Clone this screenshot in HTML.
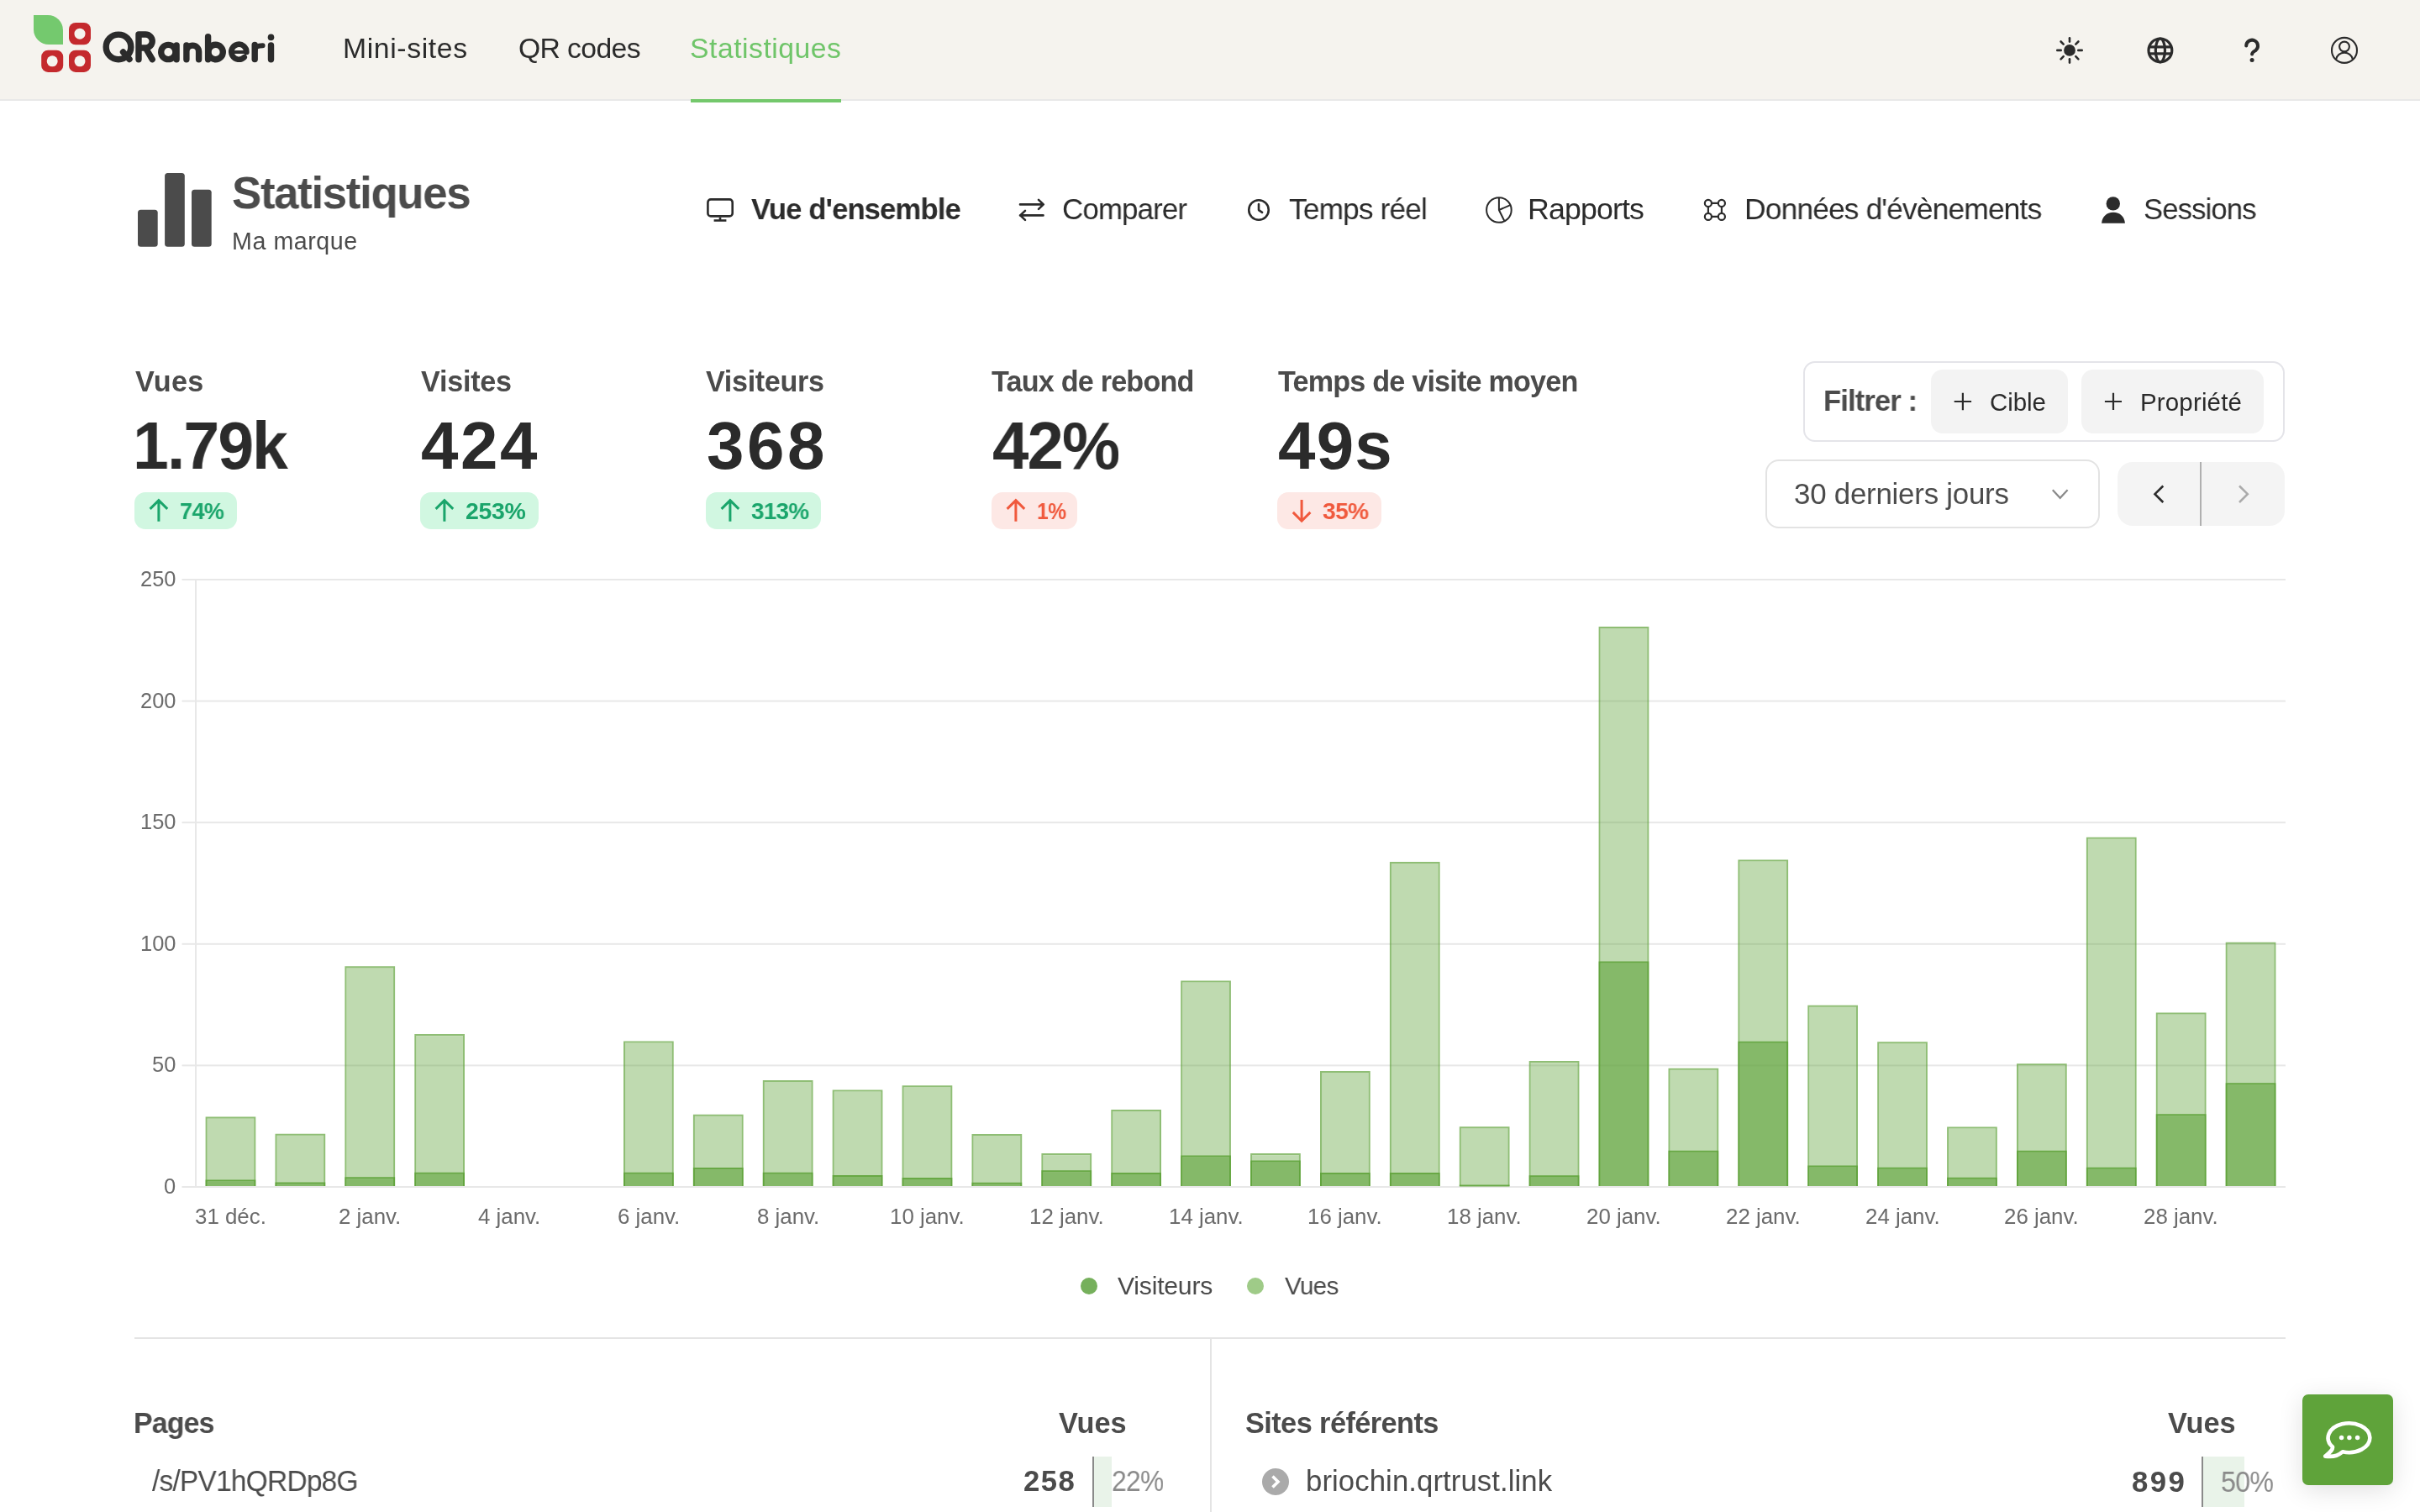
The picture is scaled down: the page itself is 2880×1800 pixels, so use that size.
<!DOCTYPE html>
<html><head><meta charset="utf-8"><style>
html,body{margin:0;padding:0;}
body{width:2880px;height:1800px;overflow:hidden;position:relative;background:#fff;font-family:"Liberation Sans",sans-serif;}
.t{position:absolute;white-space:nowrap;will-change:transform;}
.a{position:absolute;}
svg{position:absolute;overflow:visible;}
@media (max-width:2000px){html{zoom:0.5;}}
</style></head><body>
<div class="a" style="left:0;top:0;width:2880px;height:118px;background:#f5f3ee;border-bottom:2px solid #e8e8e8"></div>
<svg style="left:0;top:0" width="400" height="118" viewBox="0 0 400 118">
<path d="M40,18 H57 A18,18 0 0 1 75,36 V53 H58 A18,18 0 0 1 40,35 Z" fill="#74c96e"/>
<g fill="#c4292d">
<rect x="82" y="27" width="26" height="26.3" rx="8"/>
<rect x="49.2" y="59.7" width="26" height="26.2" rx="8"/>
<rect x="82" y="59.7" width="26" height="26.2" rx="8"/>
</g>
<g fill="#f5f3ee">
<circle cx="95" cy="40.2" r="6.5"/>
<circle cx="62.2" cy="72.8" r="6.5"/>
<circle cx="95" cy="72.8" r="6.5"/>
</g>
</svg>
<svg style="left:0;top:0" width="400" height="118" viewBox="0 0 400 118">
<g stroke="#2b2b2b" stroke-width="7.4" stroke-linecap="round" stroke-linejoin="round" fill="none">
<circle cx="141" cy="55.9" r="14.8"/>
<line x1="146.5" y1="62" x2="154" y2="70.5"/>
<path d="M165,70.7 V41 H173.2 A8,8 0 0 1 173.2,57 H165 M173.5,57.5 L181.2,70.7"/>
<circle cx="200.3" cy="62" r="8.6"/><line x1="210.1" y1="54" x2="210.1" y2="70.7"/>
<path d="M221.9,54 V70.7 M221.9,61.5 A7.35,7.35 0 0 1 236.6,61.5 V70.7"/>
<circle cx="256.6" cy="62" r="8.7"/><line x1="247.6" y1="43.8" x2="247.6" y2="70.7"/>
<path d="M293.4,62 A9.05,9.05 0 1 0 290.75,68.15" stroke-width="6.6"/><path d="M276,62 H294" stroke-width="3.9" stroke-linecap="butt"/>
<line x1="303.2" y1="53.4" x2="303.2" y2="70.6"/><path d="M303.4,60 C303.8,55.8 306.6,54.2 312.6,54.2" stroke-width="6"/>
<line x1="322.5" y1="54" x2="322.5" y2="70.7"/>
</g>
<circle cx="322.5" cy="44.4" r="3.8" fill="#2b2b2b"/>
</svg>
<div class="t" style="left:408.12px;top:41.15px;font-size:33.72px;line-height:33.72px;font-weight:400;color:#2b2b2b;letter-spacing:0.631px;">Mini-sites</div>
<div class="t" style="left:616.96px;top:41.15px;font-size:33.72px;line-height:33.72px;font-weight:400;color:#2b2b2b;letter-spacing:-0.623px;">QR codes</div>
<div class="t" style="left:821.40px;top:41.15px;font-size:33.72px;line-height:33.72px;font-weight:400;color:#6fc569;letter-spacing:0.513px;">Statistiques</div>
<div class="a" style="left:822px;top:118px;width:179px;height:4px;background:#74c86c"></div>
<svg style="left:0;top:0" width="2880" height="118" viewBox="0 0 2880 118">
<g stroke="#2b2b2b" stroke-width="2.6" stroke-linecap="round" fill="none">
<circle cx="2463" cy="59.9" r="6.9" fill="#2b2b2b" stroke="none"/>
<line x1="2463" y1="45.2" x2="2463" y2="49.6"/><line x1="2463" y1="70.2" x2="2463" y2="74.6"/>
<line x1="2448.3" y1="59.9" x2="2452.7" y2="59.9"/><line x1="2473.3" y1="59.9" x2="2477.7" y2="59.9"/>
<line x1="2452.6" y1="49.5" x2="2455.7" y2="52.6"/><line x1="2470.3" y1="67.2" x2="2473.4" y2="70.3"/>
<line x1="2452.6" y1="70.3" x2="2455.7" y2="67.2"/><line x1="2470.3" y1="52.6" x2="2473.4" y2="49.5"/>
</g>
<g stroke="#2b2b2b" stroke-width="3.2" fill="none">
<circle cx="2570.9" cy="59.9" r="13.9"/>
<ellipse cx="2570.9" cy="59.9" rx="5.6" ry="13.9"/>
<line x1="2557" y1="55.9" x2="2584.8" y2="55.9"/>
<line x1="2557" y1="63.9" x2="2584.8" y2="63.9"/>
</g>
<path d="M2673.2,54.6 A6.9,6.9 0 1 1 2684.6,59.8 C2682,61.6 2680.1,62.4 2680.1,64.6" stroke="#2b2b2b" stroke-width="4" stroke-linecap="round" fill="none"/>
<circle cx="2680.1" cy="71.4" r="2.5" fill="#2b2b2b"/>
<g stroke="#2b2b2b" stroke-width="2.1" fill="none">
<circle cx="2790" cy="59.9" r="15"/>
<circle cx="2790" cy="55.5" r="5.9"/>
<path d="M2780,70.8 A10.2,10.2 0 0 1 2800,70.8"/>
</g>
</svg>
<svg style="left:0;top:0" width="300" height="320" viewBox="0 0 300 320">
<g fill="#4b4b4b">
<rect x="164" y="249.7" width="23.7" height="44" rx="3.5"/>
<rect x="196.1" y="206" width="23.7" height="87.7" rx="3.5"/>
<rect x="228" y="225.7" width="23.7" height="68" rx="3.5"/>
</g></svg>
<div class="t" style="left:276.44px;top:202.96px;font-size:53.20px;line-height:53.20px;font-weight:700;color:#4b4b4b;letter-spacing:-1.330px;transform:scaleX(0.9923);transform-origin:0 0;">Statistiques</div>
<div class="t" style="left:275.64px;top:272.96px;font-size:28.63px;line-height:28.63px;font-weight:400;color:#4b4b4b;letter-spacing:0.558px;">Ma marque</div>
<div class="t" style="left:894.26px;top:232.03px;font-size:35.76px;line-height:35.76px;font-weight:700;color:#2b2b2b;letter-spacing:-0.894px;transform:scaleX(0.9685);transform-origin:0 0;">Vue d&#x27;ensemble</div>
<div class="t" style="left:1263.68px;top:232.03px;font-size:35.76px;line-height:35.76px;font-weight:400;color:#2b2b2b;letter-spacing:-0.894px;transform:scaleX(0.9762);transform-origin:0 0;">Comparer</div>
<div class="t" style="left:1534.48px;top:232.03px;font-size:35.76px;line-height:35.76px;font-weight:400;color:#2b2b2b;letter-spacing:-0.894px;transform:scaleX(0.9889);transform-origin:0 0;">Temps réel</div>
<div class="t" style="left:1817.80px;top:232.03px;font-size:35.76px;line-height:35.76px;font-weight:400;color:#2b2b2b;letter-spacing:-0.894px;">Rapports</div>
<div class="t" style="left:2075.56px;top:232.03px;font-size:35.76px;line-height:35.76px;font-weight:400;color:#2b2b2b;letter-spacing:-0.894px;transform:scaleX(0.9906);transform-origin:0 0;">Données d&#x27;évènements</div>
<div class="t" style="left:2551.20px;top:232.03px;font-size:35.76px;line-height:35.76px;font-weight:400;color:#2b2b2b;letter-spacing:-0.894px;transform:scaleX(0.9683);transform-origin:0 0;">Sessions</div>
<svg style="left:0;top:0" width="2880" height="320" viewBox="0 0 2880 320">
<g stroke="#2b2b2b" stroke-width="2.6" fill="none" stroke-linecap="round" stroke-linejoin="round">
<rect x="842.4" y="237.4" width="29.3" height="20" rx="3.5"/>
<line x1="857" y1="258.7" x2="857" y2="262.5" stroke-linecap="butt"/>
<line x1="849.6" y1="262.5" x2="864.4" y2="262.5" stroke-linecap="butt"/>
<path d="M1214,243.4 H1241.5 M1236,237.9 L1241.8,243.4 L1236,248.9"/>
<path d="M1241.5,256.4 H1214 M1220,250.9 L1214.2,256.4 L1220,261.9"/>
<circle cx="1498" cy="250" r="11.75"/>
<path d="M1498,243 V250.1 L1502.1,252.8"/>
</g>
<g stroke="#2b2b2b" stroke-width="2" fill="none" stroke-linejoin="round">
<circle cx="1783.9" cy="250" r="14.8"/>
<path d="M1783.9,235.2 V250 L1797.4,244.2 M1783.9,250 L1790.6,263.5"/>
</g>
<g stroke="#2b2b2b" stroke-width="2.15" fill="none">
<circle cx="2032.9" cy="241.9" r="4.05"/><circle cx="2048.9" cy="241.9" r="4.05"/>
<circle cx="2032.9" cy="257.9" r="4.05"/><circle cx="2048.9" cy="257.9" r="4.05"/>
<path d="M2037,241.9 H2044.8 M2037,257.9 H2044.8 M2032.9,246 V253.8 M2048.9,246 V253.8"/>
</g>
<circle cx="2514.8" cy="242.4" r="8.2" fill="#2b2b2b"/>
<path d="M2501.1,265.7 C2501.6,258.2 2507,252.8 2515,252.8 C2523,252.8 2528.4,258.2 2528.9,265.7 Z" fill="#2b2b2b"/>
</svg>
<div class="t" style="left:160.76px;top:437.08px;font-size:34.16px;line-height:34.16px;font-weight:700;color:#4b4b4b;letter-spacing:0.267px;">Vues</div>
<div class="t" style="left:158.00px;top:491.31px;font-size:79.94px;line-height:79.94px;font-weight:700;color:#2b2b2b;letter-spacing:-1.999px;transform:scaleX(0.9626);transform-origin:0 0;">1.79k</div>
<div class="t" style="left:501.02px;top:437.08px;font-size:34.16px;line-height:34.16px;font-weight:700;color:#4b4b4b;letter-spacing:-0.237px;">Visites</div>
<div class="t" style="left:500.68px;top:491.31px;font-size:79.94px;line-height:79.94px;font-weight:700;color:#2b2b2b;letter-spacing:2.550px;">424</div>
<div class="t" style="left:840.48px;top:437.08px;font-size:34.16px;line-height:34.16px;font-weight:700;color:#4b4b4b;letter-spacing:-0.335px;">Visiteurs</div>
<div class="t" style="left:841.40px;top:491.31px;font-size:79.94px;line-height:79.94px;font-weight:700;color:#2b2b2b;letter-spacing:3.500px;">368</div>
<div class="t" style="left:1180.48px;top:437.08px;font-size:34.16px;line-height:34.16px;font-weight:700;color:#4b4b4b;letter-spacing:-0.798px;">Taux de rebond</div>
<div class="t" style="left:1181.20px;top:491.31px;font-size:79.94px;line-height:79.94px;font-weight:700;color:#2b2b2b;letter-spacing:-1.999px;transform:scaleX(0.9756);transform-origin:0 0;">42%</div>
<div class="t" style="left:1520.74px;top:437.08px;font-size:34.16px;line-height:34.16px;font-weight:700;color:#4b4b4b;letter-spacing:-0.797px;">Temps de visite moyen</div>
<div class="t" style="left:1521.44px;top:491.31px;font-size:79.94px;line-height:79.94px;font-weight:700;color:#2b2b2b;letter-spacing:1.230px;">49s</div>
<div class="a" style="left:160px;top:585.8px;width:122px;height:44px;border-radius:13px;background:#d1f7e1"></div>
<svg style="left:0;top:0" width="2000" height="700"><path d="M188.9,620.8 V595.6 M178.6,605.9 L188.9,595.6 L199.20000000000002,605.9" stroke="#1aa56b" stroke-width="3" fill="none"/></svg>
<div class="t" style="left:214.42px;top:593.88px;font-size:28.49px;line-height:28.49px;font-weight:700;color:#1aa56b;letter-spacing:-0.712px;transform:scaleX(0.9508);transform-origin:0 0;">74%</div>
<div class="a" style="left:500px;top:585.8px;width:141px;height:44px;border-radius:13px;background:#d1f7e1"></div>
<svg style="left:0;top:0" width="2000" height="700"><path d="M528.9,620.8 V595.6 M518.6,605.9 L528.9,595.6 L539.1999999999999,605.9" stroke="#1aa56b" stroke-width="3" fill="none"/></svg>
<div class="t" style="left:554.20px;top:593.88px;font-size:28.49px;line-height:28.49px;font-weight:700;color:#1aa56b;letter-spacing:-0.307px;">253%</div>
<div class="a" style="left:840px;top:585.8px;width:137px;height:44px;border-radius:13px;background:#d1f7e1"></div>
<svg style="left:0;top:0" width="2000" height="700"><path d="M868.9,620.8 V595.6 M858.6,605.9 L868.9,595.6 L879.1999999999999,605.9" stroke="#1aa56b" stroke-width="3" fill="none"/></svg>
<div class="t" style="left:893.92px;top:593.88px;font-size:28.49px;line-height:28.49px;font-weight:700;color:#1aa56b;letter-spacing:-0.712px;transform:scaleX(0.9751);transform-origin:0 0;">313%</div>
<div class="a" style="left:1180px;top:585.8px;width:102.29999999999995px;height:44px;border-radius:13px;background:#fde8e5"></div>
<svg style="left:0;top:0" width="2000" height="700"><path d="M1208.9,620.8 V595.6 M1198.6000000000001,605.9 L1208.9,595.6 L1219.2,605.9" stroke="#f0593d" stroke-width="3" fill="none"/></svg>
<div class="t" style="left:1233.94px;top:593.88px;font-size:28.49px;line-height:28.49px;font-weight:700;color:#f0593d;letter-spacing:-0.712px;transform:scaleX(0.8643);transform-origin:0 0;">1%</div>
<div class="a" style="left:1520.2px;top:585.8px;width:123.59999999999991px;height:44px;border-radius:13px;background:#fde8e5"></div>
<svg style="left:0;top:0" width="2000" height="700"><path d="M1549.1000000000001,595 V620.2 M1538.8000000000002,609.9 L1549.1000000000001,620.2 L1559.4,609.9" stroke="#f0593d" stroke-width="3" fill="none"/></svg>
<div class="t" style="left:1574.18px;top:593.88px;font-size:28.49px;line-height:28.49px;font-weight:700;color:#f0593d;letter-spacing:-0.712px;transform:scaleX(0.9907);transform-origin:0 0;">35%</div>
<div class="a" style="left:2146.3px;top:430.2px;width:569.1px;height:91.7px;border:2px solid #e4e4e9;border-radius:14px"></div>
<div class="t" style="left:2170.36px;top:460.03px;font-size:35.76px;line-height:35.76px;font-weight:700;color:#4b4b4b;letter-spacing:-0.894px;transform:scaleX(0.9671);transform-origin:0 0;">Filtrer :</div>
<div class="a" style="left:2298px;top:439.8px;width:163px;height:75.8px;border-radius:14px;background:#f3f3f3"></div>
<div class="a" style="left:2477px;top:439.8px;width:217px;height:76px;border-radius:14px;background:#f3f3f3"></div>
<svg style="left:0;top:0" width="2880" height="700">
<path d="M2325.7,478 H2346.1 M2335.9,467.8 V488.2 M2504.9,478 H2525 M2515,467.7 V488" stroke="#2b2b2b" stroke-width="2.2" fill="none"/>
</svg>
<div class="t" style="left:2367.96px;top:463.92px;font-size:29.51px;line-height:29.51px;font-weight:400;color:#2b2b2b;letter-spacing:-0.100px;">Cible</div>
<div class="t" style="left:2546.62px;top:463.92px;font-size:29.51px;line-height:29.51px;font-weight:400;color:#2b2b2b;letter-spacing:0.148px;">Propriété</div>
<div class="a" style="left:2100.6px;top:546.6px;width:394.8px;height:78.5px;border:2px solid #e3e3e3;border-radius:16px"></div>
<div class="t" style="left:2134.70px;top:570.76px;font-size:34.88px;line-height:34.88px;font-weight:400;color:#4b4b4b;letter-spacing:-0.241px;">30 derniers jours</div>
<div class="a" style="left:2520.3px;top:550px;width:199.2px;height:76px;border-radius:18px;background:#f4f4f4"></div>
<div class="a" style="left:2618px;top:550px;width:2px;height:76px;background:#b0b0b0"></div>
<svg style="left:0;top:0" width="2880" height="700">
<path d="M2442.8,583.3 L2451.7,592.8 L2460.6,583.3" stroke="#8a8a8a" stroke-width="2.2" fill="none"/>
<path d="M2574.3,578.5 L2564.5,588.2 L2574.3,598" stroke="#2b2b2b" stroke-width="2.6" fill="none"/>
<path d="M2665,578.5 L2674.8,588.2 L2665,598" stroke="#ababab" stroke-width="2.6" fill="none"/>
</svg>
<svg style="left:0;top:0" width="2880" height="1800">
<rect x="216.5" y="689" width="2503.5" height="2" fill="#e8e8e8"/>
<rect x="216.5" y="833.6" width="2503.5" height="2" fill="#e8e8e8"/>
<rect x="216.5" y="978.2" width="2503.5" height="2" fill="#e8e8e8"/>
<rect x="216.5" y="1122.8" width="2503.5" height="2" fill="#e8e8e8"/>
<rect x="216.5" y="1267.4" width="2503.5" height="2" fill="#e8e8e8"/>
<rect x="216.5" y="1412" width="2503.5" height="2" fill="#e8e8e8"/>
<rect x="232" y="689" width="2" height="724" fill="#e8e8e8"/>
<rect x="246.61" y="1331.40" width="55.69" height="80.60" fill="rgba(95,163,58,0.4)"/>
<path fill-rule="evenodd" fill="rgba(95,163,58,0.7)" d="M244.61,1329.40h59.69v82.60h-59.69Z M246.61,1331.40v80.60h55.69v-80.60Z"/>
<rect x="329.51" y="1351.70" width="55.69" height="60.30" fill="rgba(95,163,58,0.4)"/>
<path fill-rule="evenodd" fill="rgba(95,163,58,0.7)" d="M327.51,1349.70h59.69v62.30h-59.69Z M329.51,1351.70v60.30h55.69v-60.30Z"/>
<rect x="412.41" y="1152.20" width="55.69" height="259.80" fill="rgba(95,163,58,0.4)"/>
<path fill-rule="evenodd" fill="rgba(95,163,58,0.7)" d="M410.41,1150.20h59.69v261.80h-59.69Z M412.41,1152.20v259.80h55.69v-259.80Z"/>
<rect x="495.31" y="1233.10" width="55.69" height="178.90" fill="rgba(95,163,58,0.4)"/>
<path fill-rule="evenodd" fill="rgba(95,163,58,0.7)" d="M493.31,1231.10h59.69v180.90h-59.69Z M495.31,1233.10v178.90h55.69v-178.90Z"/>
<rect x="744.01" y="1241.60" width="55.69" height="170.40" fill="rgba(95,163,58,0.4)"/>
<path fill-rule="evenodd" fill="rgba(95,163,58,0.7)" d="M742.01,1239.60h59.69v172.40h-59.69Z M744.01,1241.60v170.40h55.69v-170.40Z"/>
<rect x="826.91" y="1328.70" width="55.69" height="83.30" fill="rgba(95,163,58,0.4)"/>
<path fill-rule="evenodd" fill="rgba(95,163,58,0.7)" d="M824.91,1326.70h59.69v85.30h-59.69Z M826.91,1328.70v83.30h55.69v-83.30Z"/>
<rect x="909.81" y="1288.00" width="55.69" height="124.00" fill="rgba(95,163,58,0.4)"/>
<path fill-rule="evenodd" fill="rgba(95,163,58,0.7)" d="M907.81,1286.00h59.69v126.00h-59.69Z M909.81,1288.00v124.00h55.69v-124.00Z"/>
<rect x="992.71" y="1299.60" width="55.69" height="112.40" fill="rgba(95,163,58,0.4)"/>
<path fill-rule="evenodd" fill="rgba(95,163,58,0.7)" d="M990.71,1297.60h59.69v114.40h-59.69Z M992.71,1299.60v112.40h55.69v-112.40Z"/>
<rect x="1075.61" y="1294.30" width="55.69" height="117.70" fill="rgba(95,163,58,0.4)"/>
<path fill-rule="evenodd" fill="rgba(95,163,58,0.7)" d="M1073.61,1292.30h59.69v119.70h-59.69Z M1075.61,1294.30v117.70h55.69v-117.70Z"/>
<rect x="1158.51" y="1351.90" width="55.69" height="60.10" fill="rgba(95,163,58,0.4)"/>
<path fill-rule="evenodd" fill="rgba(95,163,58,0.7)" d="M1156.51,1349.90h59.69v62.10h-59.69Z M1158.51,1351.90v60.10h55.69v-60.10Z"/>
<rect x="1241.41" y="1375.10" width="55.69" height="36.90" fill="rgba(95,163,58,0.4)"/>
<path fill-rule="evenodd" fill="rgba(95,163,58,0.7)" d="M1239.41,1373.10h59.69v38.90h-59.69Z M1241.41,1375.10v36.90h55.69v-36.90Z"/>
<rect x="1324.31" y="1323.00" width="55.69" height="89.00" fill="rgba(95,163,58,0.4)"/>
<path fill-rule="evenodd" fill="rgba(95,163,58,0.7)" d="M1322.31,1321.00h59.69v91.00h-59.69Z M1324.31,1323.00v89.00h55.69v-89.00Z"/>
<rect x="1407.21" y="1169.60" width="55.69" height="242.40" fill="rgba(95,163,58,0.4)"/>
<path fill-rule="evenodd" fill="rgba(95,163,58,0.7)" d="M1405.21,1167.60h59.69v244.40h-59.69Z M1407.21,1169.60v242.40h55.69v-242.40Z"/>
<rect x="1490.11" y="1375.10" width="55.69" height="36.90" fill="rgba(95,163,58,0.4)"/>
<path fill-rule="evenodd" fill="rgba(95,163,58,0.7)" d="M1488.11,1373.10h59.69v38.90h-59.69Z M1490.11,1375.10v36.90h55.69v-36.90Z"/>
<rect x="1573.01" y="1276.90" width="55.69" height="135.10" fill="rgba(95,163,58,0.4)"/>
<path fill-rule="evenodd" fill="rgba(95,163,58,0.7)" d="M1571.01,1274.90h59.69v137.10h-59.69Z M1573.01,1276.90v135.10h55.69v-135.10Z"/>
<rect x="1655.91" y="1028.00" width="55.69" height="384.00" fill="rgba(95,163,58,0.4)"/>
<path fill-rule="evenodd" fill="rgba(95,163,58,0.7)" d="M1653.91,1026.00h59.69v386.00h-59.69Z M1655.91,1028.00v384.00h55.69v-384.00Z"/>
<rect x="1738.81" y="1343.20" width="55.69" height="68.80" fill="rgba(95,163,58,0.4)"/>
<path fill-rule="evenodd" fill="rgba(95,163,58,0.7)" d="M1736.81,1341.20h59.69v70.80h-59.69Z M1738.81,1343.20v68.80h55.69v-68.80Z"/>
<rect x="1821.71" y="1265.10" width="55.69" height="146.90" fill="rgba(95,163,58,0.4)"/>
<path fill-rule="evenodd" fill="rgba(95,163,58,0.7)" d="M1819.71,1263.10h59.69v148.90h-59.69Z M1821.71,1265.10v146.90h55.69v-146.90Z"/>
<rect x="1904.61" y="747.90" width="55.69" height="664.10" fill="rgba(95,163,58,0.4)"/>
<path fill-rule="evenodd" fill="rgba(95,163,58,0.7)" d="M1902.61,745.90h59.69v666.10h-59.69Z M1904.61,747.90v664.10h55.69v-664.10Z"/>
<rect x="1987.51" y="1273.70" width="55.69" height="138.30" fill="rgba(95,163,58,0.4)"/>
<path fill-rule="evenodd" fill="rgba(95,163,58,0.7)" d="M1985.51,1271.70h59.69v140.30h-59.69Z M1987.51,1273.70v138.30h55.69v-138.30Z"/>
<rect x="2070.41" y="1025.60" width="55.69" height="386.40" fill="rgba(95,163,58,0.4)"/>
<path fill-rule="evenodd" fill="rgba(95,163,58,0.7)" d="M2068.41,1023.60h59.69v388.40h-59.69Z M2070.41,1025.60v386.40h55.69v-386.40Z"/>
<rect x="2153.31" y="1198.70" width="55.69" height="213.30" fill="rgba(95,163,58,0.4)"/>
<path fill-rule="evenodd" fill="rgba(95,163,58,0.7)" d="M2151.31,1196.70h59.69v215.30h-59.69Z M2153.31,1198.70v213.30h55.69v-213.30Z"/>
<rect x="2236.21" y="1242.20" width="55.69" height="169.80" fill="rgba(95,163,58,0.4)"/>
<path fill-rule="evenodd" fill="rgba(95,163,58,0.7)" d="M2234.21,1240.20h59.69v171.80h-59.69Z M2236.21,1242.20v169.80h55.69v-169.80Z"/>
<rect x="2319.11" y="1343.60" width="55.69" height="68.40" fill="rgba(95,163,58,0.4)"/>
<path fill-rule="evenodd" fill="rgba(95,163,58,0.7)" d="M2317.11,1341.60h59.69v70.40h-59.69Z M2319.11,1343.60v68.40h55.69v-68.40Z"/>
<rect x="2402.01" y="1268.20" width="55.69" height="143.80" fill="rgba(95,163,58,0.4)"/>
<path fill-rule="evenodd" fill="rgba(95,163,58,0.7)" d="M2400.01,1266.20h59.69v145.80h-59.69Z M2402.01,1268.20v143.80h55.69v-143.80Z"/>
<rect x="2484.91" y="998.80" width="55.69" height="413.20" fill="rgba(95,163,58,0.4)"/>
<path fill-rule="evenodd" fill="rgba(95,163,58,0.7)" d="M2482.91,996.80h59.69v415.20h-59.69Z M2484.91,998.80v413.20h55.69v-413.20Z"/>
<rect x="2567.81" y="1207.50" width="55.69" height="204.50" fill="rgba(95,163,58,0.4)"/>
<path fill-rule="evenodd" fill="rgba(95,163,58,0.7)" d="M2565.81,1205.50h59.69v206.50h-59.69Z M2567.81,1207.50v204.50h55.69v-204.50Z"/>
<rect x="2650.71" y="1123.70" width="55.69" height="288.30" fill="rgba(95,163,58,0.4)"/>
<path fill-rule="evenodd" fill="rgba(95,163,58,0.7)" d="M2648.71,1121.70h59.69v290.30h-59.69Z M2650.71,1123.70v288.30h55.69v-288.30Z"/>
<rect x="246.61" y="1406.60" width="55.69" height="5.40" fill="rgba(95,163,58,0.6)"/>
<path fill-rule="evenodd" fill="rgba(95,163,58,0.9)" d="M244.61,1404.60h59.69v7.40h-59.69Z M246.61,1406.60v5.40h55.69v-5.40Z"/>
<rect x="329.51" y="1409.40" width="55.69" height="2.60" fill="rgba(95,163,58,0.6)"/>
<path fill-rule="evenodd" fill="rgba(95,163,58,0.9)" d="M327.51,1407.40h59.69v4.60h-59.69Z M329.51,1409.40v2.60h55.69v-2.60Z"/>
<rect x="412.41" y="1403.30" width="55.69" height="8.70" fill="rgba(95,163,58,0.6)"/>
<path fill-rule="evenodd" fill="rgba(95,163,58,0.9)" d="M410.41,1401.30h59.69v10.70h-59.69Z M412.41,1403.30v8.70h55.69v-8.70Z"/>
<rect x="495.31" y="1397.80" width="55.69" height="14.20" fill="rgba(95,163,58,0.6)"/>
<path fill-rule="evenodd" fill="rgba(95,163,58,0.9)" d="M493.31,1395.80h59.69v16.20h-59.69Z M495.31,1397.80v14.20h55.69v-14.20Z"/>
<rect x="744.01" y="1397.80" width="55.69" height="14.20" fill="rgba(95,163,58,0.6)"/>
<path fill-rule="evenodd" fill="rgba(95,163,58,0.9)" d="M742.01,1395.80h59.69v16.20h-59.69Z M744.01,1397.80v14.20h55.69v-14.20Z"/>
<rect x="826.91" y="1392.10" width="55.69" height="19.90" fill="rgba(95,163,58,0.6)"/>
<path fill-rule="evenodd" fill="rgba(95,163,58,0.9)" d="M824.91,1390.10h59.69v21.90h-59.69Z M826.91,1392.10v19.90h55.69v-19.90Z"/>
<rect x="909.81" y="1397.80" width="55.69" height="14.20" fill="rgba(95,163,58,0.6)"/>
<path fill-rule="evenodd" fill="rgba(95,163,58,0.9)" d="M907.81,1395.80h59.69v16.20h-59.69Z M909.81,1397.80v14.20h55.69v-14.20Z"/>
<rect x="992.71" y="1400.90" width="55.69" height="11.10" fill="rgba(95,163,58,0.6)"/>
<path fill-rule="evenodd" fill="rgba(95,163,58,0.9)" d="M990.71,1398.90h59.69v13.10h-59.69Z M992.71,1400.90v11.10h55.69v-11.10Z"/>
<rect x="1075.61" y="1404.00" width="55.69" height="8.00" fill="rgba(95,163,58,0.6)"/>
<path fill-rule="evenodd" fill="rgba(95,163,58,0.9)" d="M1073.61,1402.00h59.69v10.00h-59.69Z M1075.61,1404.00v8.00h55.69v-8.00Z"/>
<rect x="1158.51" y="1409.80" width="55.69" height="2.20" fill="rgba(95,163,58,0.6)"/>
<path fill-rule="evenodd" fill="rgba(95,163,58,0.9)" d="M1156.51,1407.80h59.69v4.20h-59.69Z M1158.51,1409.80v2.20h55.69v-2.20Z"/>
<rect x="1241.41" y="1395.30" width="55.69" height="16.70" fill="rgba(95,163,58,0.6)"/>
<path fill-rule="evenodd" fill="rgba(95,163,58,0.9)" d="M1239.41,1393.30h59.69v18.70h-59.69Z M1241.41,1395.30v16.70h55.69v-16.70Z"/>
<rect x="1324.31" y="1398.00" width="55.69" height="14.00" fill="rgba(95,163,58,0.6)"/>
<path fill-rule="evenodd" fill="rgba(95,163,58,0.9)" d="M1322.31,1396.00h59.69v16.00h-59.69Z M1324.31,1398.00v14.00h55.69v-14.00Z"/>
<rect x="1407.21" y="1377.60" width="55.69" height="34.40" fill="rgba(95,163,58,0.6)"/>
<path fill-rule="evenodd" fill="rgba(95,163,58,0.9)" d="M1405.21,1375.60h59.69v36.40h-59.69Z M1407.21,1377.60v34.40h55.69v-34.40Z"/>
<rect x="1490.11" y="1383.50" width="55.69" height="28.50" fill="rgba(95,163,58,0.6)"/>
<path fill-rule="evenodd" fill="rgba(95,163,58,0.9)" d="M1488.11,1381.50h59.69v30.50h-59.69Z M1490.11,1383.50v28.50h55.69v-28.50Z"/>
<rect x="1573.01" y="1398.00" width="55.69" height="14.00" fill="rgba(95,163,58,0.6)"/>
<path fill-rule="evenodd" fill="rgba(95,163,58,0.9)" d="M1571.01,1396.00h59.69v16.00h-59.69Z M1573.01,1398.00v14.00h55.69v-14.00Z"/>
<rect x="1655.91" y="1398.00" width="55.69" height="14.00" fill="rgba(95,163,58,0.6)"/>
<path fill-rule="evenodd" fill="rgba(95,163,58,0.9)" d="M1653.91,1396.00h59.69v16.00h-59.69Z M1655.91,1398.00v14.00h55.69v-14.00Z"/>
<path fill-rule="evenodd" fill="rgba(95,163,58,0.9)" d="M1736.81,1410.60h59.69v2.00h-59.69Z M1738.81,1412.60v0.00h55.69v0.00Z"/>
<rect x="1821.71" y="1401.20" width="55.69" height="10.80" fill="rgba(95,163,58,0.6)"/>
<path fill-rule="evenodd" fill="rgba(95,163,58,0.9)" d="M1819.71,1399.20h59.69v12.80h-59.69Z M1821.71,1401.20v10.80h55.69v-10.80Z"/>
<rect x="1904.61" y="1146.40" width="55.69" height="265.60" fill="rgba(95,163,58,0.6)"/>
<path fill-rule="evenodd" fill="rgba(95,163,58,0.9)" d="M1902.61,1144.40h59.69v267.60h-59.69Z M1904.61,1146.40v265.60h55.69v-265.60Z"/>
<rect x="1987.51" y="1371.80" width="55.69" height="40.20" fill="rgba(95,163,58,0.6)"/>
<path fill-rule="evenodd" fill="rgba(95,163,58,0.9)" d="M1985.51,1369.80h59.69v42.20h-59.69Z M1987.51,1371.80v40.20h55.69v-40.20Z"/>
<rect x="2070.41" y="1241.80" width="55.69" height="170.20" fill="rgba(95,163,58,0.6)"/>
<path fill-rule="evenodd" fill="rgba(95,163,58,0.9)" d="M2068.41,1239.80h59.69v172.20h-59.69Z M2070.41,1241.80v170.20h55.69v-170.20Z"/>
<rect x="2153.31" y="1389.50" width="55.69" height="22.50" fill="rgba(95,163,58,0.6)"/>
<path fill-rule="evenodd" fill="rgba(95,163,58,0.9)" d="M2151.31,1387.50h59.69v24.50h-59.69Z M2153.31,1389.50v22.50h55.69v-22.50Z"/>
<rect x="2236.21" y="1391.80" width="55.69" height="20.20" fill="rgba(95,163,58,0.6)"/>
<path fill-rule="evenodd" fill="rgba(95,163,58,0.9)" d="M2234.21,1389.80h59.69v22.20h-59.69Z M2236.21,1391.80v20.20h55.69v-20.20Z"/>
<rect x="2319.11" y="1403.80" width="55.69" height="8.20" fill="rgba(95,163,58,0.6)"/>
<path fill-rule="evenodd" fill="rgba(95,163,58,0.9)" d="M2317.11,1401.80h59.69v10.20h-59.69Z M2319.11,1403.80v8.20h55.69v-8.20Z"/>
<rect x="2402.01" y="1371.80" width="55.69" height="40.20" fill="rgba(95,163,58,0.6)"/>
<path fill-rule="evenodd" fill="rgba(95,163,58,0.9)" d="M2400.01,1369.80h59.69v42.20h-59.69Z M2402.01,1371.80v40.20h55.69v-40.20Z"/>
<rect x="2484.91" y="1391.80" width="55.69" height="20.20" fill="rgba(95,163,58,0.6)"/>
<path fill-rule="evenodd" fill="rgba(95,163,58,0.9)" d="M2482.91,1389.80h59.69v22.20h-59.69Z M2484.91,1391.80v20.20h55.69v-20.20Z"/>
<rect x="2567.81" y="1328.30" width="55.69" height="83.70" fill="rgba(95,163,58,0.6)"/>
<path fill-rule="evenodd" fill="rgba(95,163,58,0.9)" d="M2565.81,1326.30h59.69v85.70h-59.69Z M2567.81,1328.30v83.70h55.69v-83.70Z"/>
<rect x="2650.71" y="1291.30" width="55.69" height="120.70" fill="rgba(95,163,58,0.6)"/>
<path fill-rule="evenodd" fill="rgba(95,163,58,0.9)" d="M2648.71,1289.30h59.69v122.70h-59.69Z M2650.71,1291.30v120.70h55.69v-120.70Z"/>
</svg>
<div class="t" style="left:167.30px;top:677.06px;font-size:25.44px;line-height:25.44px;font-weight:400;color:#6b6b6b;letter-spacing:0.000px;">250</div>
<div class="t" style="left:167.30px;top:821.66px;font-size:25.44px;line-height:25.44px;font-weight:400;color:#6b6b6b;letter-spacing:0.000px;">200</div>
<div class="t" style="left:167.30px;top:966.26px;font-size:25.44px;line-height:25.44px;font-weight:400;color:#6b6b6b;letter-spacing:0.000px;">150</div>
<div class="t" style="left:167.30px;top:1110.86px;font-size:25.44px;line-height:25.44px;font-weight:400;color:#6b6b6b;letter-spacing:0.000px;">100</div>
<div class="t" style="left:181.30px;top:1255.46px;font-size:25.44px;line-height:25.44px;font-weight:400;color:#6b6b6b;letter-spacing:0.000px;">50</div>
<div class="t" style="left:195.30px;top:1400.06px;font-size:25.44px;line-height:25.44px;font-weight:400;color:#6b6b6b;letter-spacing:0.000px;">0</div>
<div class="t" style="left:231.95px;top:1436.09px;font-size:25.87px;line-height:25.87px;font-weight:400;color:#6b6b6b;letter-spacing:0.000px;">31 déc.</div>
<div class="t" style="left:403.25px;top:1436.09px;font-size:25.87px;line-height:25.87px;font-weight:400;color:#6b6b6b;letter-spacing:0.000px;">2 janv.</div>
<div class="t" style="left:569.05px;top:1436.09px;font-size:25.87px;line-height:25.87px;font-weight:400;color:#6b6b6b;letter-spacing:0.000px;">4 janv.</div>
<div class="t" style="left:734.85px;top:1436.09px;font-size:25.87px;line-height:25.87px;font-weight:400;color:#6b6b6b;letter-spacing:0.000px;">6 janv.</div>
<div class="t" style="left:900.65px;top:1436.09px;font-size:25.87px;line-height:25.87px;font-weight:400;color:#6b6b6b;letter-spacing:0.000px;">8 janv.</div>
<div class="t" style="left:1058.95px;top:1436.09px;font-size:25.87px;line-height:25.87px;font-weight:400;color:#6b6b6b;letter-spacing:0.000px;">10 janv.</div>
<div class="t" style="left:1224.75px;top:1436.09px;font-size:25.87px;line-height:25.87px;font-weight:400;color:#6b6b6b;letter-spacing:0.000px;">12 janv.</div>
<div class="t" style="left:1390.55px;top:1436.09px;font-size:25.87px;line-height:25.87px;font-weight:400;color:#6b6b6b;letter-spacing:0.000px;">14 janv.</div>
<div class="t" style="left:1556.35px;top:1436.09px;font-size:25.87px;line-height:25.87px;font-weight:400;color:#6b6b6b;letter-spacing:0.000px;">16 janv.</div>
<div class="t" style="left:1722.15px;top:1436.09px;font-size:25.87px;line-height:25.87px;font-weight:400;color:#6b6b6b;letter-spacing:0.000px;">18 janv.</div>
<div class="t" style="left:1887.95px;top:1436.09px;font-size:25.87px;line-height:25.87px;font-weight:400;color:#6b6b6b;letter-spacing:0.000px;">20 janv.</div>
<div class="t" style="left:2053.75px;top:1436.09px;font-size:25.87px;line-height:25.87px;font-weight:400;color:#6b6b6b;letter-spacing:0.000px;">22 janv.</div>
<div class="t" style="left:2219.55px;top:1436.09px;font-size:25.87px;line-height:25.87px;font-weight:400;color:#6b6b6b;letter-spacing:0.000px;">24 janv.</div>
<div class="t" style="left:2385.35px;top:1436.09px;font-size:25.87px;line-height:25.87px;font-weight:400;color:#6b6b6b;letter-spacing:0.000px;">26 janv.</div>
<div class="t" style="left:2551.15px;top:1436.09px;font-size:25.87px;line-height:25.87px;font-weight:400;color:#6b6b6b;letter-spacing:0.000px;">28 janv.</div>
<div class="a" style="left:1286px;top:1520.9px;width:20px;height:20px;border-radius:50%;background:#76b05c"></div>
<div class="a" style="left:1484px;top:1520.9px;width:20px;height:20px;border-radius:50%;background:#9fcb88"></div>
<div class="t" style="left:1330.24px;top:1516.30px;font-size:30.23px;line-height:30.23px;font-weight:400;color:#4b4b4b;letter-spacing:-0.248px;">Visiteurs</div>
<div class="t" style="left:1528.74px;top:1516.30px;font-size:30.23px;line-height:30.23px;font-weight:400;color:#4b4b4b;letter-spacing:-0.756px;transform:scaleX(0.9816);transform-origin:0 0;">Vues</div>
<div class="a" style="left:160px;top:1592px;width:2560px;height:2px;background:#e4e4e4"></div>
<div class="a" style="left:1440px;top:1594px;width:2px;height:206px;background:#e4e4e4"></div>
<div class="t" style="left:159.36px;top:1676.96px;font-size:34.30px;line-height:34.30px;font-weight:700;color:#4b4b4b;letter-spacing:-0.858px;transform:scaleX(0.9882);transform-origin:0 0;">Pages</div>
<div class="t" style="left:1260.24px;top:1676.96px;font-size:34.30px;line-height:34.30px;font-weight:700;color:#4b4b4b;letter-spacing:-0.080px;">Vues</div>
<div class="t" style="left:181.02px;top:1746.29px;font-size:34.74px;line-height:34.74px;font-weight:400;color:#4b4b4b;letter-spacing:-0.868px;transform:scaleX(0.9665);transform-origin:0 0;">/s/PV1hQRDp8G</div>
<div class="t" style="left:1218.46px;top:1746.29px;font-size:34.74px;line-height:34.74px;font-weight:700;color:#4b4b4b;letter-spacing:1.420px;">258</div>
<div class="a" style="left:1302px;top:1734px;width:21px;height:60px;background:#e9f3e9"></div>
<div class="a" style="left:1300px;top:1734px;width:2px;height:60px;background:#8a8a8a"></div>
<div class="t" style="left:1323.20px;top:1746.29px;font-size:34.74px;line-height:34.74px;font-weight:400;color:#8a8a8a;letter-spacing:-0.868px;transform:scaleX(0.9176);transform-origin:0 0;">22%</div>
<div class="t" style="left:1481.92px;top:1676.96px;font-size:34.30px;line-height:34.30px;font-weight:700;color:#4b4b4b;letter-spacing:-0.567px;">Sites référents</div>
<div class="t" style="left:2579.98px;top:1676.96px;font-size:34.30px;line-height:34.30px;font-weight:700;color:#4b4b4b;letter-spacing:-0.080px;">Vues</div>
<svg style="left:0;top:0" width="2880" height="1800">
<circle cx="1518" cy="1764" r="16" fill="#aaaaaa"/>
<path d="M1514.5,1757.5 L1521,1764 L1514.5,1770.5" stroke="#fff" stroke-width="3.6" fill="none"/>
</svg>
<div class="t" style="left:1554.40px;top:1746.29px;font-size:34.74px;line-height:34.74px;font-weight:400;color:#4b4b4b;letter-spacing:0.082px;">briochin.qrtrust.link</div>
<div class="t" style="left:2536.68px;top:1746.59px;font-size:34.74px;line-height:34.74px;font-weight:700;color:#4b4b4b;letter-spacing:2.430px;">899</div>
<div class="a" style="left:2622px;top:1734px;width:49px;height:60px;background:#e9f3e9"></div>
<div class="a" style="left:2620px;top:1734px;width:2px;height:60px;background:#8a8a8a"></div>
<div class="t" style="left:2643.20px;top:1746.59px;font-size:34.74px;line-height:34.74px;font-weight:400;color:#8a8a8a;letter-spacing:-0.868px;transform:scaleX(0.9285);transform-origin:0 0;">50%</div>
<div class="a" style="left:2740px;top:1660px;width:108px;height:108px;border-radius:7px;background:#5fa33a;box-shadow:0 6px 30px rgba(0,0,0,0.12)"></div>
<svg style="left:0;top:0" width="2880" height="1800">
<path d="M2776,1722.5 A24.85,17.4 0 1 1 2788,1728.3 C2784,1731.6 2779.5,1735 2767.2,1733.6 C2772,1729.5 2776.6,1726.3 2776,1722.5 Z" stroke="#fff" stroke-width="4.6" fill="none" stroke-linejoin="round"/>
<circle cx="2786.6" cy="1711.5" r="2.7" fill="#fff"/><circle cx="2795.9" cy="1711.5" r="2.7" fill="#fff"/><circle cx="2805.6" cy="1711.5" r="2.7" fill="#fff"/>
</svg>
</body></html>
